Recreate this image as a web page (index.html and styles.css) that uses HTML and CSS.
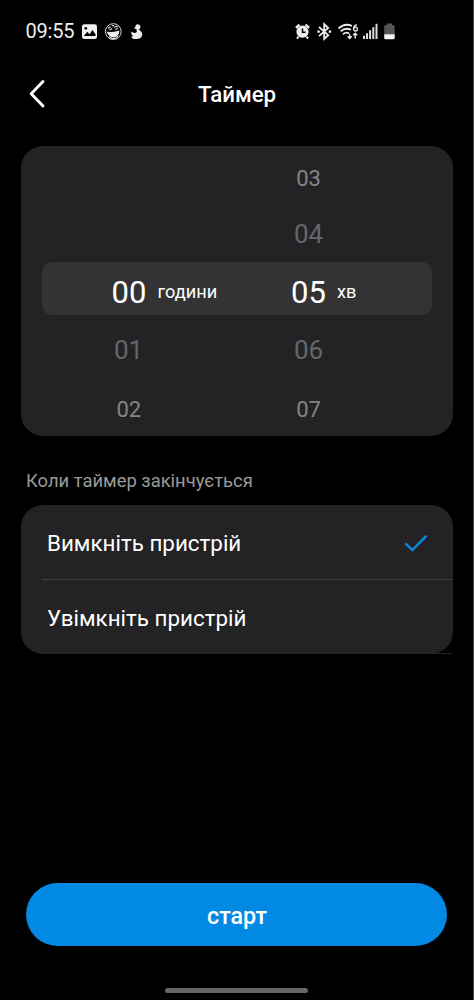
FILE: index.html
```html
<!DOCTYPE html>
<html lang="uk">
<head>
<meta charset="utf-8">
<title>Таймер</title>
<link rel="stylesheet" href="styles.css">
</head>
<body>
<div class="screen">
  <div class="status">
    <span class="clock">09:55</span>
    <svg class="notif" width="60" height="20" viewBox="0 0 60 20">
      <rect x="1" y="2.2" width="15" height="14.8" rx="2.2" fill="#eee"/>
      <circle cx="4.8" cy="6.3" r="1.4" fill="#000"/>
      <path d="M2.8 14 6.3 9.8 8.6 12.2 11.4 8 14.5 12.2V14Z" fill="#000"/>
      <circle cx="32.3" cy="9.6" r="7.9" fill="none" stroke="#ddd" stroke-width="1"/>
      <path d="M25.7 9.4Q32 11 38.3 8.6Q38.6 14.3 33.4 15.2Q27.4 15.6 25.7 9.4Z" fill="#eee"/>
      <path d="M27 6.2 29.5 4.7M28.5 7.9 31 6.4M33.2 5.7Q35 3.4 36.6 5.2M34.2 7.5 36.8 6.5M30.7 3.7H33M28.2 14.5 30.5 16.4H34.5L37 14" fill="none" stroke="#ddd" stroke-width="1.2"/>
      <path transform="translate(1.2 0)" d="M54.8 2.2Q58 2 58.2 5Q58 7 56.5 7.6Q61 10.5 59.8 13.8Q58.6 17 54.5 17H51.2Q49 15.8 49.2 14.2L51 14.4Q48.5 12.5 49.3 9.6Q51.7 11.7 54 10.6Q55.2 9.4 54.3 7.3L51.7 6.3 53.2 5Q53 3 54.8 2.2Z" fill="#eee"/>
    </svg>
    <svg class="system" width="103" height="20" viewBox="0 0 103 20">
      <g fill="none" stroke="#eee">
        <circle cx="7.5" cy="9.7" r="5.2" fill="#eee" stroke-width="1.8"/>
        <path d="M.9 5.8 4.4 2.7M14.1 5.8 10.6 2.7" stroke-width="2.4"/>
        <path d="M3.5 14.5 2 16.6M11.5 14.5 13 16.6" stroke-width="2"/>
        <path d="M7.5 6.4V10.2H10.5" stroke="#000" stroke-width="1.5"/>
        <path d="M24 5 33.2 13.2 29.2 17V2.1L33.2 6 24 14.2" stroke-width="1.8"/>
        <path d="M22.3 9.6H24.8M33.7 9.6H36.2" stroke-width="2.2"/>
        <path d="M43.5 6.5Q50 .6 57 4M45.7 9.4Q50.5 5 56 7.8M48 12.2Q51 9.6 54.2 11.5" stroke-width="1.8"/>
        <path d="M61.7 2.7Q58.6 3.5 58.6 7M54.7 12.2V16.2M52.7 14.3 54.7 16.4 56.7 14.3M60.2 16.5V11.5M58.2 13.3 60.2 11.2 62.2 13.3" stroke-width="1.4"/>
        <circle cx="60.5" cy="7.1" r="1.9" stroke-width="1.3"/>
      </g>
      <path d="M68 13.8H70V17H68ZM71 11.3H73V17H71ZM74.1 8.3H76.1V17H74.1ZM77.3 5.2H79.3V17H77.3ZM80.5 1.8H82.5V17H80.5Z" fill="#ddd"/>
      <path d="M91.8 3V1.6H97V3H98.2Q99.7 3 99.7 4.5V12.5H89.2V4.5Q89.2 3 90.7 3Z" fill="#555"/>
      <path d="M89.2 12.3H99.7V15.7Q99.7 17.2 98.4 17.2H90.5Q89.2 17.2 89.2 15.7Z" fill="#f5f5f5"/>
    </svg>
  </div>

  <header class="header">
    <svg class="back" width="20" height="30" viewBox="0 0 20 30">
      <path d="M16 2.5 4.2 14.7 16 27" fill="none" stroke="#fff" stroke-width="2.9" stroke-linecap="round" stroke-linejoin="round"/>
    </svg>
    <h1 class="title">Таймер</h1>
  </header>

  <section class="picker">
    <div class="row outer"><span></span><span class="num">03</span></div>
    <div class="row near"><span></span><span class="num">04</span></div>
    <div class="row selected">
      <span class="num">00</span><span class="unit">години</span>
      <span class="num">05</span><span class="unit">хв</span>
    </div>
    <div class="row near below"><span class="num">01</span><span class="num">06</span></div>
    <div class="row outer last"><span class="num">02</span><span class="num">07</span></div>
  </section>

  <p class="caption">Коли таймер закінчується</p>

  <section class="options">
    <div class="option"><span>Вимкніть пристрій</span>
      <svg class="check" width="26" height="22" viewBox="0 0 26 22">
        <path d="M3.2 12.2 9.3 18.1 22.7 4.5" fill="none" stroke="#0c87de" stroke-width="2.5" stroke-linecap="round" stroke-linejoin="miter"/>
      </svg>
    </div>
    <div class="divider"></div>
    <div class="option"><span>Увімкніть пристрій</span></div>
  </section>
  <div class="divider end"></div>

  <button class="start">старт</button>
  <div class="home"></div>
</div>
</body>
</html>
```
FILE: styles.css
```css
* { box-sizing: border-box; }
body { margin: 0; background: #000; color: #fff; font-family: Roboto, sans-serif; }
.screen {
  width: 474px; height: 1000px; overflow: hidden;
  display: flex; flex-direction: column;
  border-right: 1px solid #484848;
}
.status { display: flex; align-items: center; height: 44px; margin-top: 10px; padding-left: 25.5px; }
.clock { width: 55.5px; margin-bottom: 2px; font-size: 20px; line-height: 24px; color: #eee; letter-spacing: -0.2px; }
.notif { display: block; overflow: visible; }
.system { display: block; margin-left: 154px; }
.header { display: grid; grid-template-columns: 27px 20px 1fr; align-items: center; height: 80px; }
.back { grid-column: 2; }
.title { margin: 0 0 0 151px; font-size: 22.3px; font-weight: 500; line-height: 30px; }
.picker {
  width: 431.5px; height: 289.5px; margin: 12px 0 0.5px 21px; padding: 4px 20.5px 0 21px;
  background: #232325; border-radius: 22px;
}
.row { display: grid; grid-template-columns: 173px 187px; align-items: center; height: 56px; }
.num { text-align: center; }
.outer { font-size: 22px; color: #858587; }
.near { font-size: 26px; color: #666668; }
.below { height: 70px; }
.last { grid-template-columns: 173.5px 186px; height: 49px; }
.selected {
  grid-template-columns: 69.5px 46px 133.5px 46px auto; height: 52.5px; padding-top: 8px;
  background: #333335; border-radius: 10px; font-size: 31px;
}
.selected .num { text-align: left; }
.selected .num:first-child { grid-column: 2; }
.unit { font-size: 18.2px; padding-bottom: 1px; }
.caption { margin: 33px 0 0 26px; font-size: 18.4px; line-height: 24px; color: #9a9a9a; }
.options { width: 431.5px; height: 149px; margin: 12px 0 0 21px; background: #232325; border-radius: 22px; }
.option { display: flex; align-items: center; justify-content: space-between; height: 74px; padding: 2px 24px 0 26px; font-size: 22.4px; }
.divider { height: 1px; margin-left: 21px; background: #424244; }
.divider.end { width: 410px; margin: -1px 0 0 42px; background: #252527; }
.start {
  width: 421px; height: 63px; margin: 229px 0 0 26px; padding: 2px 0 0 1px; border: 0; border-radius: 32px;
  background: #0289e4; color: #fff; font: 500 23.3px/30px Roboto, sans-serif;
}
.home { width: 143px; height: 5px; margin: 42px 0 0 165px; border-radius: 3px; background: #666; }
```
